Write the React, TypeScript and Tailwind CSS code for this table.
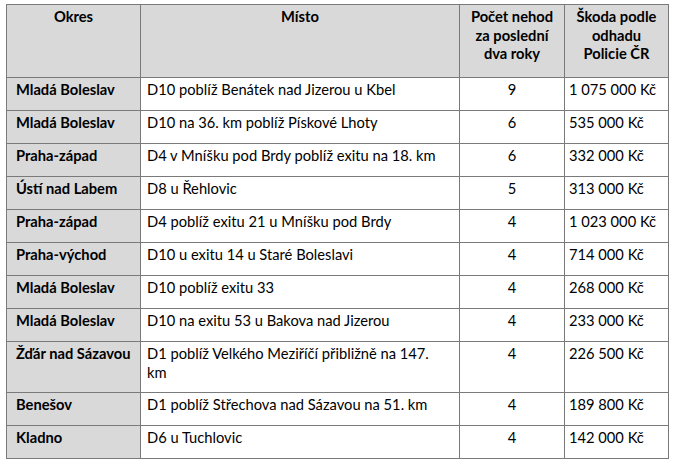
const rows: [string, string, string, string][] = [
  ['Mladá Boleslav', 'D10 poblíž Benátek nad Jizerou u Kbel', '9', '1 075 000 Kč'],
  ['Mladá Boleslav', 'D10 na 36. km poblíž Pískové Lhoty', '6', '535 000 Kč'],
  ['Praha-západ', 'D4 v Mníšku pod Brdy poblíž exitu na 18. km', '6', '332 000 Kč'],
  ['Ústí nad Labem', 'D8 u Řehlovic', '5', '313 000 Kč'],
  ['Praha-západ', 'D4 poblíž exitu 21 u Mníšku pod Brdy', '4', '1 023 000 Kč'],
  ['Praha-východ', 'D10 u exitu 14 u Staré Boleslavi', '4', '714 000 Kč'],
  ['Mladá Boleslav', 'D10 poblíž exitu 33', '4', '268 000 Kč'],
  ['Mladá Boleslav', 'D10 na exitu 53 u Bakova nad Jizerou', '4', '233 000 Kč'],
  ['Žďár nad Sázavou', 'D1 poblíž Velkého Meziříčí přibližně na 147.\nkm', '4', '226 500 Kč'],
  ['Benešov', 'D1 poblíž Střechova nad Sázavou na 51. km', '4', '189 800 Kč'],
  ['Kladno', 'D6 u Tuchlovic', '4', '142 000 Kč'],
];

const cell = 'border-r border-b border-[#7a7a7a] pt-[2px] leading-[18.5px]';

export default function App() {
  return (
    <div className="min-h-screen bg-white pt-[4px] pl-[6px] font-['Lato','Liberation_Sans',sans-serif] text-[14.7px] text-black">
      <div className="grid w-[663px] grid-cols-[134px_319px_105px_104px] grid-rows-[73px_repeat(8,33px)_51px_33px_33px] border-l border-t border-[#7a7a7a]">
        <div className={`${cell} bg-[#d9d9d9] text-center font-bold`}>Okres</div>
        <div className={`${cell} bg-[#d9d9d9] text-center font-bold`}>Místo</div>
        <div className={`${cell} bg-[#d9d9d9] text-center font-bold`}>
          Počet nehod
          <br />
          za poslední
          <br />
          dva roky
        </div>
        <div className={`${cell} bg-[#d9d9d9] text-center font-bold`}>
          Škoda podle
          <br />
          odhadu
          <br />
          Policie ČR
        </div>
        {rows.map(([okres, misto, pocet, skoda], i) => (
          <div key={i} className="contents">
            <div className={`${cell} bg-[#d9d9d9] pl-[9px] font-bold`}>{okres}</div>
            <div className={`${cell} whitespace-pre-line pl-[6px] pr-2`}>{misto}</div>
            <div className={`${cell} text-center`}>{pocet}</div>
            <div className={`${cell} pl-[4px]`}>{skoda}</div>
          </div>
        ))}
      </div>
    </div>
  );
}
